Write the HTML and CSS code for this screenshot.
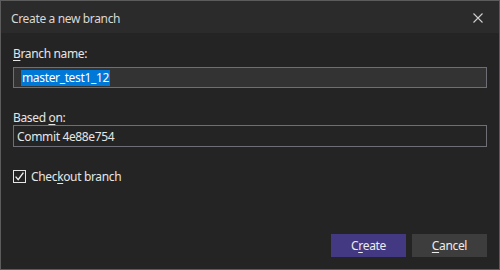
FILE: index.html
```html
<!DOCTYPE html>
<html>
<head>
<meta charset="utf-8">
<link rel="stylesheet" href="styles.css">
</head>
<body>
<div class="dialog">
  <div class="titlebar">
    <span class="title">Create a new branch</span>
    <svg class="close" width="10" height="10" viewBox="0 0 10 10"><path d="M0.5 0.5 L9.5 9.5 M9.5 0.5 L0.5 9.5" stroke="#cfcfcf" stroke-width="1.1" fill="none"/></svg>
  </div>
  <div class="content">
    <div class="label label-first"><u>B</u>ranch name:</div>
    <div class="field field-active"><span class="sel">master_test1_12</span></div>
    <div class="label label-second">Based <u>o</u>n:</div>
    <div class="field field-plain">Commit 4e88e754</div>
    <div class="check-row">
      <svg class="checkbox" width="13" height="13" viewBox="0 0 13 13"><rect x="0.5" y="0.5" width="12" height="12" fill="none" stroke="#e6e6e6"/><path d="M2.6 6.6 L5.2 9.6 L10.4 2.6" stroke="#f0f0f0" stroke-width="1.4" fill="none"/></svg>
      <span>Chec<u>k</u>out branch</span>
    </div>
    <div class="spacer"></div>
    <div class="buttons">
      <div class="btn btn-primary">C<u>r</u>eate</div>
      <div class="btn btn-secondary"><u>C</u>ancel</div>
    </div>
  </div>
</div>
</body>
</html>
```
FILE: styles.css
```css
html, body {
  margin: 0;
  padding: 0;
  background: #242424;
}
.dialog {
  box-sizing: border-box;
  width: 500px;
  height: 270px;
  border: 1px solid #5c5c5c;
  background: #242424;
  display: flex;
  flex-direction: column;
  font-family: "Noto Sans", "DejaVu Sans", sans-serif;
  font-size: 12px;
  letter-spacing: -0.35px;
  color: #e6e6e6;
}
.titlebar {
  height: 32px;
  background: #2b2b2b;
  display: flex;
  align-items: center;
  justify-content: space-between;
  padding: 0 16px 0 10px;
  flex: none;
}
.title {
  color: #d8d8d8;
  font-size: 12px;
  position: relative;
  top: 1px;
}
.close {
  display: block;
  position: relative;
  top: 1px;
}
.content {
  flex: 1;
  display: flex;
  flex-direction: column;
  padding: 0 12px 12px 12px;
}
.label {
  height: 14px;
  line-height: 14px;
  color: #e6e6e6;
}
.label-first { margin-top: 14px; margin-bottom: 6px; }
.label-second { margin-top: 23px; }
.field {
  box-sizing: border-box;
  border: 1px solid #6e6e76;
  display: flex;
  align-items: center;
  color: #e6e6e6;
}
.field-active {
  height: 21px;
  background: #333333;
  padding-left: 7px;
}
.sel {
  background: #0078d7;
  color: #ffffff;
  line-height: 16px;
  padding: 0 1px;
}
.field-plain {
  height: 22px;
  background: #242424;
  padding-left: 3px;
}
.check-row {
  margin-top: 22px;
  display: flex;
  align-items: center;
  gap: 5px;
  height: 14px;
}
.checkbox { display: block; }
.spacer { flex: 1; }
.buttons {
  display: flex;
  justify-content: flex-end;
  gap: 6px;
}
.btn {
  width: 75px;
  height: 23px;
  display: flex;
  align-items: center;
  justify-content: center;
  color: #ececec;
}
.btn-primary { background: #433982; }
.btn-secondary { background: #3d3d3d; }
u { text-underline-offset: 2px; }
```
